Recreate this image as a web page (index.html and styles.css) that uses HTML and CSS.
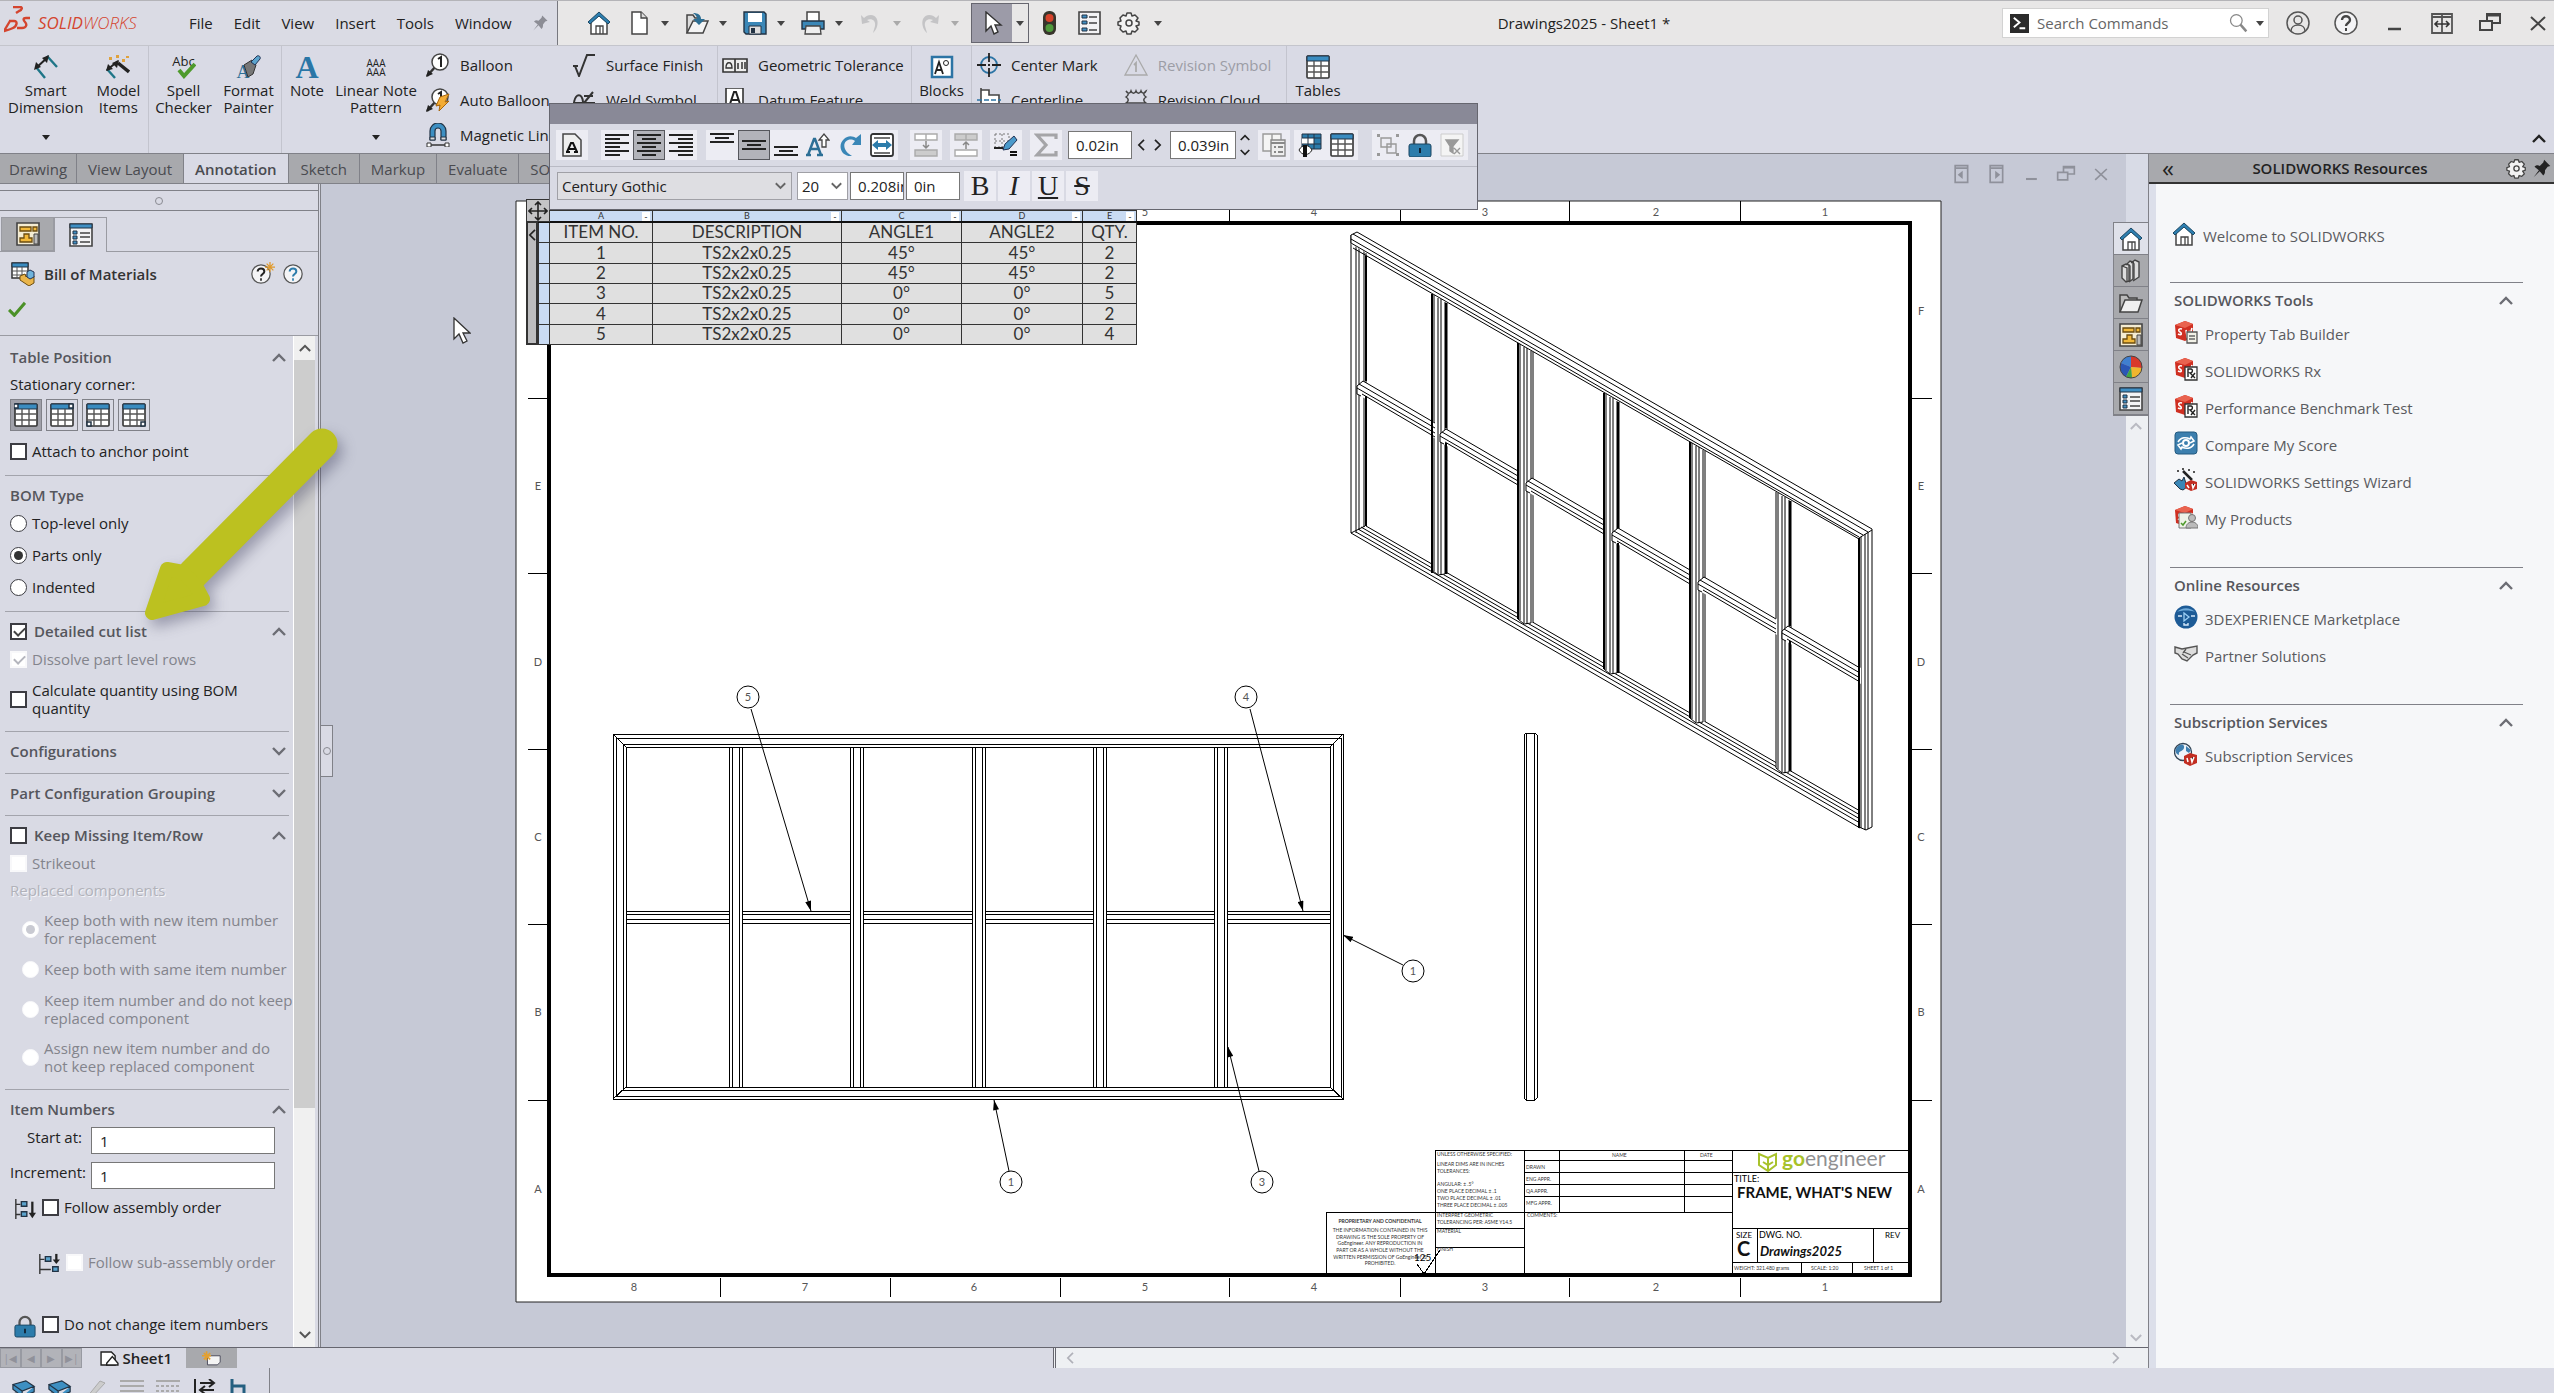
FILE: index.html
```html
<!DOCTYPE html>
<html lang="en">
<head>
  <meta charset="UTF-8" />
  <meta name="viewport" content="width=device-width, initial-scale=1.0"/>
  <title>Drawings2025 - Sheet1 *</title>
  <link rel="stylesheet" href="styles.css">
</head>
<body>

<!-- shared icons -->
<svg class="defs" aria-hidden="true">
  <symbol id="i-home" viewBox="0 0 24 24"><path d="M4 11v12h16V11L12 4z" fill="#fff" stroke="#444" stroke-width="1.5"/><path d="M9 23v-8h7v8M13 15v8" fill="none" stroke="#444" stroke-width="1.3"/><path d="M1 11L12 1l11 10-2 2-9-8-9 8z" fill="#2d7fb0" stroke="#1d4863" stroke-width="1"/></symbol>
  <symbol id="i-new" viewBox="0 0 24 24"><path d="M5 1h9l6 6v16H5z" fill="#fff" stroke="#444" stroke-width="1.5"/><path d="M14 1v6h6" fill="#ddd" stroke="#444" stroke-width="1.3"/></symbol>
  <symbol id="i-open" viewBox="0 0 24 24"><path d="M2 22V4h6l2 3h4v4" fill="#ddd" stroke="#444" stroke-width="1.5"/><path d="M2 22L8 10h15l-5 12z" fill="#f4f4f4" stroke="#444" stroke-width="1.5"/><path d="M8 2c5 0 8 2 8 6h4l-6 6-6-6h4c0-2-1-4-4-6z" fill="#2d6e93"/></symbol>
  <symbol id="i-save" viewBox="0 0 24 24"><path d="M1 1h20l2 2v20H3l-2-2z" fill="#3a87b7" stroke="#234" stroke-width="1.4"/><path d="M5 2h14v9H5z" fill="#fff"/><path d="M6 15h12v8H6z" fill="#ddd" stroke="#234"/><path d="M8 17h4v5H8z" fill="#234"/></symbol>
  <symbol id="i-print" viewBox="0 0 24 24"><path d="M6 10V1h12v9" fill="#fff" stroke="#444" stroke-width="1.5"/><path d="M1 10h22v8H1z" fill="#3a87b7" stroke="#234" stroke-width="1.4"/><path d="M5 15h14l1 8H4z" fill="#eee" stroke="#444" stroke-width="1.3"/></symbol>
  <symbol id="i-undo" viewBox="0 0 24 24"><path d="M2 4l1 9 8-2-3-2c5-2 9 1 8 6l-2 7c6-5 7-17-2-18-3 0-5 1-7 3z" fill="#c4c4c6"/></symbol>
  <symbol id="i-redo" viewBox="0 0 24 24"><path d="M22 4l-1 9-8-2 3-2c-5-2-9 1-8 6l2 7C4 17 3 5 12 4c3 0 5 1 7 3z" fill="#c4c4c6"/></symbol>
  <symbol id="i-cursor" viewBox="0 0 24 24"><path d="M6 1v19l5-5 3 8 4-2-3-7h6z" fill="#fff" stroke="#333" stroke-width="1.4"/></symbol>
  <symbol id="i-light" viewBox="0 0 24 24"><rect x="6" y="0" width="13" height="24" rx="6" fill="#38352c"/><circle cx="12.500" cy="7" r="4" fill="#d8432b"/><circle cx="12.500" cy="17" r="4" fill="#4f9a3c"/></symbol>
  <symbol id="i-list" viewBox="0 0 24 24"><path d="M2 1h21v22H2z" fill="#f3f3f5" stroke="#444" stroke-width="1.6"/><path d="M5 4h5v3H5zM5 10h5v3H5zM5 17h5v3H5z" fill="#3f8fc4" stroke="#234"/><path d="M12 6h8M12 12h8M12 19h8" stroke="#444" stroke-width="1.4"/></symbol>
  <symbol id="i-props" viewBox="0 0 24 24"><path d="M1 1h22v22H1z" fill="#f3f3f5" stroke="#444" stroke-width="1.6"/><path d="M1 1h22v4H1z" fill="#3f8fc4" stroke="#234"/><path d="M4 8h4v3H4zM4 13h4v3H4zM4 18h4v3H4z" fill="#3f8fc4" stroke="#234"/><path d="M11 10h10M11 14h10M11 19h10" stroke="#444" stroke-width="1.4"/></symbol>
  <symbol id="i-gear" viewBox="0 0 24 24"><path d="M10 2h4l1 3 3-1 3 3-2 3 3 1v3l-3 1 2 3-3 3-3-1-1 3h-4l-1-3-3 1-3-3 1-3-3-1v-3l3-1-1-3 3-3 3 1z" fill="#f2f2f2" stroke="#444" stroke-width="1.5" stroke-linejoin="round"/><circle cx="12" cy="12" r="3" fill="none" stroke="#444" stroke-width="1.5"/></symbol>
  <symbol id="i-pin" viewBox="0 0 24 24"><path d="M15 2l7 7-3 1-3 4c0 3 0 4-2 6l-4-5-7 7 6-8-5-4c2-2 4-2 6-1l4-4z" fill="currentColor"/></symbol>
  <symbol id="i-arrow" viewBox="0 0 8 5"><path d="M0 0h8L4 5z" fill="currentColor"/></symbol>
  <symbol id="i-up" viewBox="0 0 14 9"><path d="M1 8l6-6 6 6" fill="none" stroke="currentColor" stroke-width="2.400"/></symbol>
  <symbol id="i-down" viewBox="0 0 14 9"><path d="M1 1l6 6 6-6" fill="none" stroke="currentColor" stroke-width="2.400"/></symbol>
  <symbol id="i-left" viewBox="0 0 9 14"><path d="M8 1L2 7l6 6" fill="none" stroke="currentColor" stroke-width="2"/></symbol>
  <symbol id="i-right" viewBox="0 0 9 14"><path d="M1 1l6 6-6 6" fill="none" stroke="currentColor" stroke-width="2"/></symbol>
  <symbol id="i-search" viewBox="0 0 24 24"><circle cx="10" cy="9" r="7" fill="none" stroke="#888" stroke-width="1.5"/><path d="M15 14l7 8" stroke="#888" stroke-width="3"/></symbol>
  <symbol id="i-user" viewBox="0 0 24 24"><circle cx="12" cy="12" r="11" fill="none" stroke="#555" stroke-width="1.5"/><circle cx="12" cy="9" r="4" fill="none" stroke="#555" stroke-width="1.5"/><path d="M5 20c0-8 14-8 14 0" fill="none" stroke="#555" stroke-width="1.5"/></symbol>
  <symbol id="i-help" viewBox="0 0 24 24"><circle cx="12" cy="12" r="11" fill="#f4f4f6" stroke="#555" stroke-width="1.5"/><path d="M8 9c0-5 8-5 8 0 0 3-4 3-4 6" fill="none" stroke="currentColor" stroke-width="2.400"/><path d="M11 17h2v3h-2z" fill="currentColor"/></symbol>
  <symbol id="i-star" viewBox="0 0 12 12"><path d="M6 0v12M0 6h12M2 2l8 8M10 2l-8 8" stroke="#e09a2c" stroke-width="1.5"/></symbol>
  <symbol id="i-min" viewBox="0 0 24 24"><path d="M6 18h13" stroke="currentColor" stroke-width="2.500"/></symbol>
  <symbol id="i-span" viewBox="0 0 24 24"><path d="M2 3h20v19H2zM12 3v19M2 6h20" fill="none" stroke="#555" stroke-width="1.800"/><path d="M5 13h14M8 10l-3 3 3 3M16 10l3 3-3 3" fill="none" stroke="#333" stroke-width="1.600"/></symbol>
  <symbol id="i-restore" viewBox="0 0 24 24"><path d="M9 10V3h13v9h-8M2 10h12v9H2z" fill="none" stroke="currentColor" stroke-width="2"/><path d="M9 4h13" stroke="currentColor" stroke-width="3"/></symbol>
  <symbol id="i-close" viewBox="0 0 24 24"><path d="M5 6l14 13M19 6L5 19" stroke="currentColor" stroke-width="2"/></symbol>
  <symbol id="i-docprev" viewBox="0 0 24 24"><path d="M5 2h15v20H5zM5 5h15" fill="none" stroke="#8f919b" stroke-width="2"/><path d="M14 8v10l-6-5z" fill="#8f919b"/></symbol>
  <symbol id="i-docnext" viewBox="0 0 24 24"><path d="M5 2h15v20H5zM5 5h15" fill="none" stroke="#8f919b" stroke-width="2"/><path d="M11 8v10l6-5z" fill="#8f919b"/></symbol>

  <symbol id="i-smart" viewBox="0 0 24 24"><path d="M2 12l9 11M13 1l10 11" stroke="#1f7688" stroke-width="2.400"/><path d="M2 13L14 2" stroke="#222" stroke-width="2"/><path d="M0 15l2-8 5 5zM15 0l-2 8-5-5z" fill="#222"/></symbol>
  <symbol id="i-model" viewBox="0 0 24 24"><path d="M1 14l8 9" stroke="#1f7688" stroke-width="2.400"/><path d="M12 8l11 9" stroke="#222" stroke-width="3.500"/><path d="M1 15L12 6" stroke="#222" stroke-width="2"/><path d="M0 16l2-7 5 5zM13 5l-2 8-5-5z" fill="#222"/><path d="M3 2h3v3H3zM10 0h3v3h-3zM16 4h3v3h-3zM20 1h3v2h-3z" fill="#e0a23c"/></symbol>
  <symbol id="i-spell" viewBox="0 0 24 24"><path d="M7 15l5 6L23 9" fill="none" stroke="#4e9a2c" stroke-width="4"/></symbol>
  <symbol id="i-format" viewBox="0 0 24 24"><path d="M7 10l8-5 4 5-3 9-5 3z" fill="#777" stroke="#333"/><path d="M14 7l6-6c2-1 4 1 3 3l-5 6z" fill="#5ba3cc" stroke="#235"/></symbol>
  <symbol id="i-balloon" viewBox="0 0 24 24"><path d="M1 23l9-10" stroke="#333" stroke-width="2.500"/><path d="M0 24l2-7 5 4z" fill="#222"/><circle cx="14" cy="9" r="8" fill="#fff" stroke="#444" stroke-width="1.5"/><path d="M12 6l3-2v10" fill="none" stroke="#222" stroke-width="2"/></symbol>
  <symbol id="i-bolt" viewBox="0 0 24 24"><path d="M23 6l-9 3-4 9 4-1-1 6 10-10-4 1z" fill="#f3ac35" stroke="#a8660c"/></symbol>
  <symbol id="i-magnet" viewBox="0 0 24 24"><path d="M4 17V8a8 8 0 0 1 16 0v9h-5V8a3 3 0 0 0-6 0v9z" fill="#3d8fc2" stroke="#234" stroke-width="1.200"/><path d="M4 14h5v3H4zM15 14h5v3h-5z" fill="#ddd" stroke="#234"/><path d="M3 22h18" stroke="#333" stroke-width="1.5"/><path d="M1 20h4v4H1zM19 20h4v4h-4z" fill="#fff" stroke="#333"/></symbol>
  <symbol id="i-surface" viewBox="0 0 24 24"><path d="M1 13h5M3 13l4 10L15 2h8" fill="none" stroke="#333" stroke-width="2"/></symbol>
  <symbol id="i-weld" viewBox="0 0 24 24"><path d="M2 14c2-9 8-9 9 0M12 15L21 4M12 8h9M1 15h22" fill="none" stroke="#333" stroke-width="2"/></symbol>
  <symbol id="i-geo" viewBox="0 0 26 24"><path d="M1 6h24v13H1zM13 6v13" fill="#eee" stroke="#333" stroke-width="1.600"/><path d="M4 15c0-7 6-7 6 0z" fill="none" stroke="#333" stroke-width="1.300"/><path d="M16 10v6M20 9v7M23 9v7" stroke="#333" stroke-width="1.500"/></symbol>
  <symbol id="i-datum" viewBox="0 0 24 24"><path d="M3 0h17v20H3z" fill="#fff" stroke="#333" stroke-width="1.600"/><path d="M7 16l4-12h2l4 12M8 12h8" fill="none" stroke="#222" stroke-width="2"/></symbol>
  <symbol id="i-block" viewBox="0 0 24 24"><path d="M2 2h20v20H2z" fill="#fff" stroke="#2c74a5" stroke-width="2.500"/><path d="M5 19l4-12 4 12M6 15h6" fill="none" stroke="#222" stroke-width="1.800"/><circle cx="16" cy="8" r="2.500" fill="none" stroke="#222"/></symbol>
  <symbol id="i-center" viewBox="0 0 24 24"><circle cx="12" cy="12" r="8" fill="none" stroke="#2c74a5" stroke-width="1.800"/><path d="M12 0v9M12 15v9M0 12h9M15 12h9M12 11v2M11 12h2" stroke="#222" stroke-width="1.800"/></symbol>
  <symbol id="i-cline" viewBox="0 0 24 24"><path d="M4 0v22M4 2h8v5h10v12H4" fill="#fff" stroke="#444" stroke-width="1.600"/><path d="M0 12h24" stroke="#2c74a5" stroke-width="1.600" stroke-dasharray="5 2"/></symbol>
  <symbol id="i-revsym" viewBox="0 0 24 24"><path d="M12 2l11 20H1z" fill="none" stroke="#aaa" stroke-width="1.300"/><path d="M10 12l2-2v9" fill="none" stroke="#aaa" stroke-width="1.800"/></symbol>
  <symbol id="i-cloud" viewBox="0 0 24 24"><path d="M2 3c2 3 4 3 5 0 1 3 4 3 5 0 1 3 4 3 5 0 1 3 4 3 5 0-3 2-3 4 0 6-3 2-3 4 0 6H2c3-2 3-4 0-6 3-2 3-4 0-6z" fill="none" stroke="#444" stroke-width="1.5"/></symbol>
  <symbol id="i-table" viewBox="0 0 24 24"><rect x="1" y="1" width="22" height="22" rx="1" fill="#fff" stroke="#333" stroke-width="1.600"/><path d="M1 1h22v5H1z" fill="#3a8cc0" stroke="#234"/><path d="M8 6v17M15 6v17M1 11h22M1 17h22" stroke="#555" stroke-width="1.400"/></symbol>
  <symbol id="i-bom" viewBox="0 0 24 24"><path d="M1 1h16v15H1z" fill="#fff" stroke="#333" stroke-width="1.500"/><path d="M1 1h16v4H1z" fill="#3a8cc0" stroke="#234"/><path d="M6 5v11M11 5v11M1 9h16M1 13h16" stroke="#555"/><path d="M9 14l5-2 1 3 4-4 4 3v7l-5 3-9-6z" fill="#eab54a" stroke="#6b4c10"/><path d="M16 10l3-2 4 2v5l-4 2-3-2z" fill="#6fb4dc" stroke="#235"/></symbol>
  <symbol id="i-tree" viewBox="0 0 24 24"><path d="M1 1h22v22H1z" fill="#f4ecd2" stroke="#444" stroke-width="1.600"/><path d="M4 5h11v4H4zM17 5h4v4h-4zM4 20v-4h4v-4h5v4h3v4z" fill="#f2b93b" stroke="#6b4c10" stroke-width="1.300"/><path d="M18 12h4v10h-4z" fill="#bbb" stroke="#444"/></symbol>
  <symbol id="i-books" viewBox="0 0 24 24"><path d="M3 7l4-2 3 1v16l-3 1-4-4zM7 6l4-4 3 1v17l-4 3M12 4l4-3 4 2v15l-6 4" fill="#ddd" stroke="#444" stroke-width="1.400"/><path d="M3 7l5 2v14M10 6l1 1v15M14 3l1 2v16" fill="none" stroke="#444" stroke-width="1.300"/></symbol>
  <symbol id="i-folder" viewBox="0 0 24 24"><path d="M1 21V4h7l2 3h8v4" fill="#bbb" stroke="#444" stroke-width="1.500"/><path d="M1 21l5-12h17l-4 12z" fill="#f0f0f0" stroke="#444" stroke-width="1.500"/></symbol>
  <symbol id="i-sphere" viewBox="0 0 24 24"><path d="M12 12V1a11 11 0 0 0-10 7z" fill="#3f7fd0"/><path d="M12 12L2 8a11 11 0 0 0 5 14z" fill="#2a56b5"/><path d="M12 12V1a11 11 0 0 1 11 12z" fill="#d8392b"/><path d="M12 12l11 1a11 11 0 0 1-10 10z" fill="#efb62e"/><path d="M12 12l1 11a11 11 0 0 1-6-1z" fill="#3fa545"/><circle cx="12" cy="12" r="11" fill="none" stroke="#444"/></symbol>
  <symbol id="i-cube" viewBox="0 0 24 24"><path d="M1 5l10-4 8 3v13l-8 4-9-3z" fill="#cf2f22"/><path d="M1 5l10-4 8 3-8 4z" fill="#e9634f"/><path d="M8 9c-4-1-4 2-2 3s2 4-2 2M12 10l1 6 2-4 1 3 2-7" fill="none" stroke="#fff" stroke-width="1.600"/></symbol>
  <symbol id="i-note-b" viewBox="0 0 24 24"><path d="M13 12h10v11H13z" fill="#f2f2e8" stroke="#555" stroke-width="1.300"/><path d="M15 16h6M15 19h6" stroke="#666" stroke-width="1.300"/></symbol>
  <symbol id="i-rx-b" viewBox="0 0 24 24"><path d="M11 10h12v13H11z" fill="#fff" stroke="#333" stroke-width="1.300"/><path d="M14 20v-8h3c2 0 2 4-1 4l5 5M21 16l-4 5" fill="none" stroke="#222" stroke-width="1.400"/></symbol>
  <symbol id="i-score" viewBox="0 0 24 24"><rect x="1" y="1" width="22" height="22" rx="3" fill="#3c7fae" stroke="#235a80"/><circle cx="12" cy="12" r="3" fill="none" stroke="#fff" stroke-width="2"/><path d="M4 11c3-5 8-5 12-3l1-2 3 4-4 2M20 13c-3 5-8 5-12 3l-1 2-3-4 4-2" fill="none" stroke="#fff" stroke-width="1.600"/></symbol>
  <symbol id="i-wizard" viewBox="0 0 24 24"><path d="M0 15l5-4 3 2 2-4 3 10-4 3-3-1z" fill="#3a87b7" stroke="#234"/><path d="M9 3l9 9" stroke="#222" stroke-width="2.500"/><path d="M3 3h2M8 1h2M14 2h2M19 4h2" stroke="#555" stroke-width="2"/><path d="M11 15l6-3 6 2v7l-6 2-6-3z" fill="#c22e22"/><path d="M13 17l2 3M18 16l1 4 2-4" stroke="#fff" stroke-width="1.500"/></symbol>
  <symbol id="i-person-b" viewBox="0 0 24 24"><path d="M5 8h12v15H5z" fill="#eef2e8" stroke="#777"/><path d="M7 18l2 2 3-4" fill="none" stroke="#4e9a2c" stroke-width="1.500"/><circle cx="18" cy="13" r="3.500" fill="#bbb" stroke="#777"/><path d="M12 23c0-8 12-8 12 0z" fill="#bbb" stroke="#777"/></symbol>
  <symbol id="i-3dx" viewBox="0 0 24 24"><circle cx="12" cy="12" r="11.500" fill="#1d5b96"/><path d="M3 7c5-5 13-5 18 0-4-2-14-2-18 0z" fill="#6ea9d8"/><path d="M10 8l5 4-5 4z" fill="none" stroke="#9cd0f5" stroke-width="1.300"/><path d="M4 11h4M17 11h4M10 18v2h4v-2" fill="none" stroke="#d5e9fa" stroke-width="1.400"/></symbol>
  <symbol id="i-hands" viewBox="0 0 24 24"><path d="M1 5l7 2 5-1 10-2v7l-4 2-6 6-5-2-4-5-3-1z" fill="#ddd" stroke="#555" stroke-width="1.400"/><path d="M8 12l6 4M10 10l7 3M12 7l-3 4" stroke="#555" stroke-width="1.300"/></symbol>
  <symbol id="i-globe" viewBox="0 0 24 24"><circle cx="9" cy="10" r="8.500" fill="#eef4fa" stroke="#345" stroke-width="1.300"/><path d="M3 5c4-4 8-3 7 1s-6 2-5 7c-3-1-5-4-2-8zM12 4l5 4-2 3-3-2z" fill="#3f7fb0"/><path d="M10 14l6-3 7 2v8l-7 3-6-3z" fill="#c22e22"/><path d="M13 16l1 4M17 16l1 4 2-5" stroke="#fff" stroke-width="1.500"/></symbol>
  <symbol id="i-lock" viewBox="0 0 24 24"><path d="M6 12V8a6 6 0 0 1 12 0v4" fill="none" stroke="#555" stroke-width="2.500"/><rect x="1" y="11" width="22" height="13" rx="2" fill="#2c7cab" stroke="#1b4560"/><path d="M12 15v5" stroke="#123" stroke-width="2"/></symbol>
  <symbol id="i-order" viewBox="0 0 24 24"><path d="M2 1v22M2 7h5M2 18h5" fill="none" stroke="#333" stroke-width="1.500"/><path d="M8 4h6v5H8zM8 15h6v5H8z" fill="#5ba3cc" stroke="#234" stroke-width="1.500"/><path d="M20 4v14" stroke="#222" stroke-width="2.500"/><path d="M16 16h8l-4 6z" fill="#222"/></symbol>
  <symbol id="i-suborder" viewBox="0 0 24 24"><path d="M2 1v22M2 7h5M2 18h12" fill="none" stroke="#333" stroke-width="1.500"/><path d="M8 4h6v5H8zM16 15h6v5h-6z" fill="#5ba3cc" stroke="#234" stroke-width="1.500"/><path d="M20 1v8" stroke="#222" stroke-width="2.500"/><path d="M16 7h8l-4 5z" fill="#222"/></symbol>

  <symbol id="i-doca" viewBox="0 0 24 24"><path d="M3 1h12l6 6v16H3z" fill="#eee" stroke="#444" stroke-width="1.500"/><path d="M7 19l4-9h2l4 9M8 16h8M6 19h4M14 19h4" fill="none" stroke="#111" stroke-width="2"/></symbol>
  <symbol id="i-al" viewBox="0 0 24 24"><path d="M0 2h24M0 6h15M0 10h24M0 14h15M0 18h24M0 22h15" stroke="#222" stroke-width="2"/></symbol>
  <symbol id="i-ac" viewBox="0 0 24 24"><path d="M0 2h24M5 6h14M0 10h24M5 14h14M0 18h24M5 22h14" stroke="#222" stroke-width="2"/></symbol>
  <symbol id="i-ar" viewBox="0 0 24 24"><path d="M0 2h24M9 6h15M0 10h24M9 14h15M0 18h24M9 22h15" stroke="#222" stroke-width="2"/></symbol>
  <symbol id="i-vt" viewBox="0 0 24 24"><path d="M0 1h24M5 5h14M0 9h24" stroke="#222" stroke-width="2"/></symbol>
  <symbol id="i-vm" viewBox="0 0 24 24"><path d="M0 8h24M5 12h14M0 16h24" stroke="#222" stroke-width="2"/></symbol>
  <symbol id="i-vb" viewBox="0 0 24 24"><path d="M0 14h24M5 18h14M0 22h24" stroke="#222" stroke-width="2"/></symbol>
  <symbol id="i-aup" viewBox="0 0 24 24"><path d="M2 22l6-16h1l6 16M4 16h9M0 22h5M11 22h6" fill="none" stroke="#2c6f96" stroke-width="2.500"/><path d="M16 14V7h-3l5-6 5 6h-3v7z" fill="#fff" stroke="#444" stroke-width="1.300"/></symbol>
  <symbol id="i-rot" viewBox="0 0 24 24"><path d="M14 23C3 24-1 12 6 6c4-4 9-3 12-1l5-4v11h-9l3-4c-6-4-13 1-10 8 1 3 4 5 7 7z" fill="#3a87b7"/></symbol>
  <symbol id="i-fit" viewBox="0 0 24 24"><rect x="1" y="1" width="22" height="22" rx="2" fill="#fff" stroke="#333" stroke-width="1.800"/><path d="M4 5h16M4 20h16" stroke="#444" stroke-width="1.500"/><path d="M2 12l6-5v3h8V7l6 5-6 5v-3H8v3z" fill="#2c7cab"/></symbol>
  <symbol id="i-insr" viewBox="0 0 24 24"><path d="M1 1h22v6H1zM12 1v6" fill="#fff" stroke="#aaa" stroke-width="1.400"/><path d="M1 17h22v6H1z" fill="#ccc" stroke="#aaa" stroke-width="1.400"/><path d="M12 8v6M9 12l3 3 3-3" fill="none" stroke="#888" stroke-width="1.500"/></symbol>
  <symbol id="i-insc" viewBox="0 0 24 24"><path d="M1 1h22v6H1zM12 1v6" fill="#ccc" stroke="#aaa" stroke-width="1.400"/><path d="M1 17h22v6H1z" fill="#fff" stroke="#aaa" stroke-width="1.400"/><path d="M12 16v-6M9 12l3-3 3 3" fill="none" stroke="#888" stroke-width="1.500"/></symbol>
  <symbol id="i-draw" viewBox="0 0 24 24"><path d="M1 1h14v13H1zM8 1v13M1 8h14" fill="none" stroke="#777" stroke-dasharray="2 2"/><path d="M0 15h9" stroke="#222" stroke-width="2"/><path d="M9 17l2-6 9-8 3 4-8 9z" fill="#4b9acb" stroke="#235"/><path d="M16 19h7M16 22h7" stroke="#111" stroke-width="2"/></symbol>
  <symbol id="i-sigma" viewBox="0 0 24 24"><path d="M22 6V2H3l9 10L3 22h19v-4" fill="none" stroke="#a5a5a8" stroke-width="3.200"/></symbol>
  <symbol id="i-tabprops" viewBox="0 0 24 24"><path d="M1 1h18v17H1zM10 1v17" fill="#f4f4f4" stroke="#999" stroke-width="1.400"/><path d="M9 7h14v16H9z" fill="#eee" stroke="#888" stroke-width="1.400"/><path d="M9 10h14M12 14h2M16 14h5M12 19h2M16 19h5" stroke="#888" stroke-width="1.800"/></symbol>
  <symbol id="i-vis" viewBox="0 0 24 24"><path d="M4 1h19v15H4z" fill="#2c7cab" stroke="#234"/><path d="M4 5h12v6H4z" fill="#fff"/><path d="M10 1v15M16 1v15M4 5h19M4 11h19" stroke="#234"/><path d="M1 17c3-6 10-6 13 0-3 6-10 6-13 0z" fill="#fff" stroke="#222"/><path d="M7 12v12" stroke="#111" stroke-width="4"/></symbol>
  <symbol id="i-group" viewBox="0 0 24 24"><path d="M5 5h10v9H5zM11 11h9v9h-9z" fill="none" stroke="#999" stroke-width="1.400"/><path d="M1 1h3v3H1zM20 1h3v3h-3zM1 20h3v3H1zM20 20h3v3h-3z" fill="#999"/></symbol>
  <symbol id="i-nofilter" viewBox="0 0 24 24"><path d="M1 1h22v22H1z" fill="#f4f4f4" stroke="#ccc"/><path d="M6 7h12l-5 6v7l-3-2v-5zM14 15l6 6M20 15l-6 6" fill="#999" stroke="#999" stroke-width="1.400"/></symbol>
  <symbol id="i-sheet" viewBox="0 0 20 16"><path d="M1 1h11l4 4v10H1z" fill="#fff" stroke="#222" stroke-width="1.500"/><path d="M7 13l6-7 6 7v2H7z" fill="#fff" stroke="#222" stroke-width="1.500"/></symbol>
  <symbol id="i-layer" viewBox="0 0 26 24"><path d="M1 5l14-4 9 6-13 5zM1 5v5l10 8V12M11 18l13-5V7" fill="#3d8fc2" stroke="#234" stroke-width="1.300"/><path d="M3 14l8 6 13-5" fill="none" stroke="#234" stroke-width="1.300"/></symbol>
</svg>

<header class="titlebar">
  <div class="brand">
    <svg class="ds" viewBox="0 0 28 28" aria-hidden="true"><path d="M9 1h7c3 0 2 3-1 4l-3 2M5 15h5c4 0 3 5-1 7-2 1-5 2-9 3l6-10M26 12h-4c-3 0-3 2-1 4s2 6-3 6h-5" fill="none" stroke="#d4452f" stroke-width="2.400"/></svg>
    <span class="wordmark"><b>SOLID</b>WORKS</span>
    <nav class="menu">
      <a href="#">File</a><a href="#">Edit</a><a href="#">View</a><a href="#">Insert</a><a href="#">Tools</a><a href="#">Window</a>
    </nav>
    <button class="icon pin" aria-label="Pin menu"><svg><use href="#i-pin"/></svg></button>
  </div>
  <div class="quick">
    <button class="icon home" aria-label="Home"><svg><use href="#i-home"/></svg></button>
    <div class="drop"><button class="icon" aria-label="New"><svg><use href="#i-new"/></svg></button><button class="caret" aria-label="New options"><svg><use href="#i-arrow"/></svg></button></div>
    <div class="drop"><button class="icon" aria-label="Open"><svg><use href="#i-open"/></svg></button><button class="caret" aria-label="Open options"><svg><use href="#i-arrow"/></svg></button></div>
    <div class="drop"><button class="icon" aria-label="Save"><svg><use href="#i-save"/></svg></button><button class="caret" aria-label="Save options"><svg><use href="#i-arrow"/></svg></button></div>
    <div class="drop"><button class="icon" aria-label="Print"><svg><use href="#i-print"/></svg></button><button class="caret" aria-label="Print options"><svg><use href="#i-arrow"/></svg></button></div>
    <div class="drop off"><button class="icon" aria-label="Undo" disabled><svg><use href="#i-undo"/></svg></button><button class="caret" aria-label="Undo options" disabled><svg><use href="#i-arrow"/></svg></button></div>
    <div class="drop off"><button class="icon" aria-label="Redo" disabled><svg><use href="#i-redo"/></svg></button><button class="caret" aria-label="Redo options" disabled><svg><use href="#i-arrow"/></svg></button></div>
    <div class="select-tool"><button class="icon" aria-label="Select"><svg><use href="#i-cursor"/></svg></button><button class="caret" aria-label="Select options"><svg><use href="#i-arrow"/></svg></button></div>
    <div class="quick-end">
      <button class="icon" aria-label="Rebuild"><svg><use href="#i-light"/></svg></button>
      <button class="icon" aria-label="File properties"><svg><use href="#i-list"/></svg></button>
      <button class="icon" aria-label="Options"><svg><use href="#i-gear"/></svg></button>
    </div>
    <button class="caret" aria-label="More options"><svg><use href="#i-arrow"/></svg></button>
  </div>
  <div class="doc-title">Drawings2025 - Sheet1 *</div>
  <div class="search">
    <svg class="prompt" viewBox="0 0 20 20" aria-hidden="true"><path d="M0 0h20v20H0z" fill="#2b2b2b"/><path d="M4 4l6 5-6 5M10 15h6" fill="none" stroke="#fff" stroke-width="2"/></svg>
    <input type="text" placeholder="Search Commands" aria-label="Search Commands">
    <svg class="glass"><use href="#i-search"/></svg>
    <button class="caret" aria-label="Search options"><svg><use href="#i-arrow"/></svg></button>
  </div>
  <div class="window-buttons">
    <button class="icon" aria-label="Account"><svg><use href="#i-user"/></svg></button>
    <button class="icon" aria-label="Help"><svg><use href="#i-help"/></svg></button>
    <button class="icon" aria-label="Minimize"><svg><use href="#i-min"/></svg></button>
    <button class="icon" aria-label="Span displays"><svg><use href="#i-span"/></svg></button>
    <button class="icon" aria-label="Restore"><svg><use href="#i-restore"/></svg></button>
    <button class="icon" aria-label="Close"><svg><use href="#i-close"/></svg></button>
  </div>
</header>

<section class="ribbon">
  <div class="group g1">
    <button class="big w72"><svg><use href="#i-smart"/></svg><span>Smart<br>Dimension</span><svg class="tri"><use href="#i-arrow"/></svg></button>
    <button class="big w72"><svg><use href="#i-model"/></svg><span>Model<br>Items</span></button>
  </div>
  <div class="group g2">
    <button class="big w64"><span class="abc">Abc<svg><use href="#i-spell"/></svg></span><span>Spell<br>Checker</span></button>
    <button class="big w64"><span class="abc paint">A<svg><use href="#i-format"/></svg></span><span>Format<br>Painter</span></button>
  </div>
  <div class="group g3">
    <button class="big w50"><span class="note-a">A</span><span>Note</span></button>
    <button class="big w88"><span class="aaa">AAA<br>AAA</span><span>Linear Note<br>Pattern</span><svg class="tri"><use href="#i-arrow"/></svg></button>
    <div class="stack s1">
      <button><svg><use href="#i-balloon"/></svg>Balloon</button>
      <button><svg><use href="#i-balloon"/><use href="#i-bolt"/></svg>Auto Balloon</button>
      <button><svg><use href="#i-magnet"/></svg>Magnetic Line</button>
    </div>
    <div class="stack s2">
      <button><svg><use href="#i-surface"/></svg>Surface Finish</button>
      <button><svg><use href="#i-weld"/></svg>Weld Symbol</button>
    </div>
  </div>
  <div class="group g4">
    <div class="stack">
      <button><svg><use href="#i-geo"/></svg>Geometric Tolerance</button>
      <button><svg><use href="#i-datum"/></svg>Datum Feature</button>
    </div>
  </div>
  <div class="group g5">
    <button class="big"><svg><use href="#i-block"/></svg><span>Blocks</span></button>
  </div>
  <div class="group g6">
    <div class="stack">
      <button><svg><use href="#i-center"/></svg>Center Mark</button>
      <button><svg><use href="#i-cline"/></svg>Centerline</button>
    </div>
    <div class="stack">
      <button disabled><svg><use href="#i-revsym"/></svg>Revision Symbol</button>
      <button><svg><use href="#i-cloud"/></svg>Revision Cloud</button>
    </div>
  </div>
  <div class="group g7">
    <button class="big"><svg><use href="#i-table"/></svg><span>Tables</span></button>
  </div>
  <button class="collapse" aria-label="Collapse ribbon"><svg><use href="#i-up"/></svg></button>
</section>

<!-- floating table format toolbar -->
<div class="floatbar">
  <div class="float-title"></div>
  <div class="float-row">
    <div class="tools t1"><button aria-label="Font"><svg><use href="#i-doca"/></svg></button></div>
    <div class="tools t2">
      <button aria-label="Align left"><svg><use href="#i-al"/></svg></button>
      <button class="on" aria-label="Align center"><svg><use href="#i-ac"/></svg></button>
      <button aria-label="Align right"><svg><use href="#i-ar"/></svg></button>
    </div>
    <div class="tools t3">
      <button aria-label="Align top"><svg><use href="#i-vt"/></svg></button>
      <button class="on" aria-label="Align middle"><svg><use href="#i-vm"/></svg></button>
      <button aria-label="Align bottom"><svg><use href="#i-vb"/></svg></button>
      <button aria-label="Text direction"><svg><use href="#i-aup"/></svg></button>
      <button aria-label="Rotate"><svg><use href="#i-rot"/></svg></button>
      <button aria-label="Fit text"><svg><use href="#i-fit"/></svg></button>
    </div>
    <div class="tools t4"><button aria-label="Insert below"><svg><use href="#i-insr"/></svg></button></div>
    <div class="tools t5"><button aria-label="Insert above"><svg><use href="#i-insc"/></svg></button></div>
    <div class="tools t5"><button aria-label="Border editing"><svg><use href="#i-draw"/></svg></button></div>
    <div class="tools t5"><button aria-label="Equation"><svg><use href="#i-sigma"/></svg></button></div>
    <input class="gap-x" type="text" value="0.02in" aria-label="Horizontal padding">
    <div class="hstep"><svg><use href="#i-left"/></svg><svg><use href="#i-right"/></svg></div>
    <input class="gap-y" type="text" value="0.039in" aria-label="Vertical padding">
    <div class="vstep"><svg><use href="#i-up"/></svg><svg><use href="#i-down"/></svg></div>
    <div class="tools"><button aria-label="Table properties"><svg><use href="#i-tabprops"/></svg></button></div>
    <div class="tools"><button aria-label="Show hidden"><svg><use href="#i-vis"/></svg></button><button aria-label="Table"><svg><use href="#i-table"/></svg></button></div>
    <div class="tools t6">
      <button aria-label="Group"><svg><use href="#i-group"/></svg></button>
      <button aria-label="Lock"><svg><use href="#i-lock"/></svg></button>
      <button aria-label="Clear filter"><svg><use href="#i-nofilter"/></svg></button>
    </div>
  </div>
  <div class="float-row font-row">
    <div class="picker font"><select aria-label="Font family"><option>Century Gothic</option></select><svg><use href="#i-down"/></svg></div>
    <div class="picker size"><select aria-label="Font size"><option>20</option></select><svg><use href="#i-down"/></svg></div>
    <input type="text" value="0.208in" aria-label="Text height">
    <input type="text" value="0in" aria-label="Text spacing">
    <button class="letter b">B</button>
    <button class="letter i">I</button>
    <button class="letter u">U</button>
    <button class="letter s">S</button>
  </div>
</div>

<main class="main">
  <div class="left">
    <div class="desk">
      <div class="workarea">
        <div class="tabrow">
          <nav class="tabs">
            <a href="#">Drawing</a><a href="#">View Layout</a><a href="#" class="active">Annotation</a><a href="#">Sketch</a><a href="#">Markup</a><a href="#">Evaluate</a><a href="#">SOLIDWORKS Add-Ins</a>
          </nav>
          <div class="doc-buttons">
            <button aria-label="Previous view"><svg><use href="#i-docprev"/></svg></button>
            <button aria-label="Next view"><svg><use href="#i-docnext"/></svg></button>
            <button aria-label="Minimize document"><svg><use href="#i-min"/></svg></button>
            <button aria-label="Restore document"><svg><use href="#i-restore"/></svg></button>
            <button aria-label="Close document"><svg><use href="#i-close"/></svg></button>
          </div>
        </div>
        <div class="split">
          <aside class="panel">
            <div class="grip"><i></i></div>
            <div class="ptabs">
              <button aria-label="Feature tree"><svg><use href="#i-tree"/></svg></button>
              <button class="active" aria-label="Properties"><svg><use href="#i-props"/></svg></button>
            </div>
            <div class="phead">
              <svg><use href="#i-bom"/></svg>
              <h1>Bill of Materials</h1>
              <button class="whats" aria-label="What's new"><svg><use href="#i-help"/></svg><svg class="star"><use href="#i-star"/></svg></button>
              <button class="blue" aria-label="Help"><svg><use href="#i-help"/></svg></button>
            </div>
            <button class="ok" aria-label="OK"><svg viewBox="0 0 20 18"><path d="M1 10l6 6L19 2" fill="none" stroke="#4b9127" stroke-width="3.500"/></svg></button>
            <div class="pscroll">
              <form class="pbody">
                <section>
                  <h2>Table Position <svg><use href="#i-up"/></svg></h2>
                  <p class="lbl">Stationary corner:</p>
                  <div class="corners">
                    <button type="button" class="on" aria-label="Top left"><svg viewBox="0 0 24 24"><use href="#i-table"/><path d="M0 1h4v4H0z" fill="#fff" stroke="#234" stroke-width="1.500"/></svg></button>
                    <button type="button" aria-label="Top right"><svg viewBox="0 0 24 24"><use href="#i-table"/><path d="M19 1h4v4h-4z" fill="#fff" stroke="#234" stroke-width="1.500"/></svg></button>
                    <button type="button" aria-label="Bottom left"><svg viewBox="0 0 24 24"><use href="#i-table"/><path d="M1 19h4v4H1z" fill="#fff" stroke="#234" stroke-width="1.500"/></svg></button>
                    <button type="button" aria-label="Bottom right"><svg viewBox="0 0 24 24"><use href="#i-table"/><path d="M19 19h4v4h-4z" fill="#fff" stroke="#234" stroke-width="1.500"/></svg></button>
                  </div>
                  <label class="row m10"><input type="checkbox"> Attach to anchor point</label>
                </section>
                <section>
                  <h2>BOM Type</h2>
                  <label class="row m8"><input type="radio" name="bom"> Top-level only</label>
                  <label class="row m12"><input type="radio" name="bom" checked> Parts only</label>
                  <label class="row m12"><input type="radio" name="bom"> Indented</label>
                </section>
                <section>
                  <h2><label class="row"><input type="checkbox" checked> Detailed cut list</label> <svg><use href="#i-up"/></svg></h2>
                  <label class="row off m8"><input type="checkbox" checked disabled> Dissolve part level rows</label>
                  <label class="row two m12"><input type="checkbox"> Calculate quantity using BOM<br>quantity</label>
                </section>
                <section class="short"><h2>Configurations <svg><use href="#i-down"/></svg></h2></section>
                <section class="short"><h2>Part Configuration Grouping <svg><use href="#i-down"/></svg></h2></section>
                <section>
                  <h2><label class="row"><input type="checkbox"> Keep Missing Item/Row</label> <svg><use href="#i-up"/></svg></h2>
                  <label class="row off m8"><input type="checkbox" disabled> Strikeout</label>
                  <p class="lbl ghost">Replaced components</p>
                  <div class="replace">
                    <label class="row off two"><input type="radio" name="rep" checked disabled> <span>Keep both with new item number<br>for replacement</span></label>
                    <label class="row off"><input type="radio" name="rep" disabled> <span>Keep both with same item number</span></label>
                    <label class="row off two"><input type="radio" name="rep" disabled> <span>Keep item number and do not keep<br>replaced component</span></label>
                    <label class="row off two"><input type="radio" name="rep" disabled> <span>Assign new item number and do<br>not keep replaced component</span></label>
                  </div>
                </section>
                <section>
                  <h2>Item Numbers <svg><use href="#i-up"/></svg></h2>
                  <div class="field"><label for="start">Start at:</label><input id="start" type="text" value="1"></div>
                  <div class="field"><label for="inc">Increment:</label><input id="inc" type="text" value="1"></div>
                  <div class="opt"><svg><use href="#i-order"/></svg><label class="row"><input type="checkbox"> Follow assembly order</label></div>
                  <div class="opt sub"><svg><use href="#i-suborder"/></svg><label class="row off"><input type="checkbox" disabled> Follow sub-assembly order</label></div>
                  <div class="opt lock"><svg><use href="#i-lock"/></svg><label class="row"><input type="checkbox"> Do not change item numbers</label></div>
                </section>
              </form>
              <div class="vbar"><div class="cap"><svg><use href="#i-up"/></svg></div><div class="thumb"></div><div class="cap low"><svg><use href="#i-down"/></svg></div></div>
            </div>
          </aside>

          <div class="canvas">
            <div class="handle"><i></i></div>
            <svg class="sheet" viewBox="321 184 1805 1163" preserveAspectRatio="xMinYMin meet">
              <defs>
                <marker id="tip" viewBox="0 0 10 6" refX="10" refY="3" markerWidth="11" markerHeight="6" markerUnits="userSpaceOnUse" orient="auto"><path d="M0 0l10 3-10 3z"/></marker>
                <g id="mull"><path d="M0 747v340M3 747v340M10 747v340M13 747v340"/></g>
                <g id="rail"><path d="M0 911h109M0 914h109M0 919h109M0 923h109"/></g>
                <!-- one upright of the isometric view -->
                <g id="post"><path d="M0 0l15 9v271l-7 1-8-5z" fill="#fff" stroke="none"/><path d="M0 0v276M2 1v276M6 4v276M9 5v276M13 8v272M15 9v271M0 276l6 5 7-1"/></g>
                <!-- one cross rail of the isometric view -->
                <g id="cross"><path d="M0 6l6-5 73 42v16L0 14z" fill="#fff" stroke="none"/><path d="M0 6v8l4 2M0 6l6-5" /><path d="M6 1l72 42M2 4l76 44M0 8l78 45M5 14l73 43" /></g>
              </defs>
              <path class="paper" d="M516 201h1425v1101H516z"/>
              <path class="border" d="M549 223h1361v1052H549z"/>
              <g class="thin">
                <path d="M1229 201v20M1400 201v20M1569 201v20M1740 201v20"/>
                <path d="M720 1278v19M890 1278v19M1060 1278v19M1229 1278v19M1400 1278v19M1569 1278v19M1740 1278v19"/>
                <path d="M1912 398h20M1912 573h20M1912 749h20M1912 924h20M1912 1100h20"/>
                <path d="M528 398h20M528 573h20M528 749h20M528 924h20M528 1100h20"/>
              </g>
              <g class="zone">
                <text x="1145" y="216">5</text><text x="1314" y="216">4</text><text x="1485" y="216">3</text><text x="1656" y="216">2</text><text x="1825" y="216">1</text>
                <text x="634" y="1291">8</text><text x="805" y="1291">7</text><text x="974" y="1291">6</text><text x="1145" y="1291">5</text><text x="1314" y="1291">4</text><text x="1485" y="1291">3</text><text x="1656" y="1291">2</text><text x="1825" y="1291">1</text>
                <text x="1921" y="315">F</text><text x="1921" y="490">E</text><text x="1921" y="666">D</text><text x="1921" y="841">C</text><text x="1921" y="1016">B</text><text x="1921" y="1193">A</text>
                <text x="538" y="490">E</text><text x="538" y="666">D</text><text x="538" y="841">C</text><text x="538" y="1016">B</text><text x="538" y="1193">A</text>
              </g>

              <!-- front view -->
              <g class="thin">
                <path d="M613 734h730v365H613zM616 738h725v358H616zM623 744h710v346H623zM626 747h704v340H626z"/>
                <path d="M613 734l13 13M1343 734l-13 13M613 1099l13-12M1343 1099l-13-12"/>
                <use href="#mull" x="729"/><use href="#mull" x="850"/><use href="#mull" x="972"/><use href="#mull" x="1093"/><use href="#mull" x="1214"/>
                <path d="M626 911h103M626 914h103M626 919h103M626 923h103"/>
                <use href="#rail" x="742"/><use href="#rail" x="863"/><use href="#rail" x="985"/><use href="#rail" x="1106"/>
                <path d="M1227 911h103M1227 914h103M1227 919h103M1227 923h103"/>
              </g>
              <!-- side view -->
              <path class="thin" d="M1524 1098V735l2-2h9l2 2v363l-2 2h-9zM1526 733v367M1534 733v367"/>

              <!-- balloons -->
              <g class="balloon">
                <path d="M751 709l60 202" marker-end="url(#tip)"/><path d="M1250 709l53 202" marker-end="url(#tip)"/><path d="M1403 965l-60-30" marker-end="url(#tip)"/><path d="M1009 1171l-15-71" marker-end="url(#tip)"/><path d="M1259 1171l-31-124" marker-end="url(#tip)"/>
                <circle cx="748" cy="697" r="11"/><circle cx="1246" cy="697" r="11"/><circle cx="1413" cy="971" r="11"/><circle cx="1011" cy="1182" r="11"/><circle cx="1262" cy="1182" r="11"/>
                <text x="748" y="701">5</text><text x="1246" y="701">4</text><text x="1413" y="975">1</text><text x="1011" y="1186">1</text><text x="1262" y="1186">3</text>
              </g>

              <!-- isometric view -->
              <g class="iso">
                <path d="M1351 235v298M1356 240v293M1359 245v285M1364 251v276M1366 253v273"/>
                <path d="M1351 533l509 295M1356 532l504 291M1358 529l502 290M1361 527l499 288M1366 526l494 285M1351 533l14-7"/>
                <use href="#post" x="1432" y="294"/><use href="#post" x="1518" y="343"/><use href="#post" x="1604" y="393"/><use href="#post" x="1690" y="442"/><use href="#post" x="1776" y="492"/>
                <path d="M1351 235l6-3 515 298-12 9-509-295z" fill="#fff" stroke="none"/>
                <path d="M1357 232l515 297M1353 234l515 298M1351 239l512 296M1351 243l508 294M1353 248l506 291M1351 235l6-3M1351 235v8"/>
                <path d="M1859 538l13-9v297l-6 4-7-3z" fill="#fff" stroke="none"/>
                <path d="M1859 538v290M1861 537v291M1865 534v296M1868 532v297M1872 529v298l-6 3-7-3M1859 538l13-8"/>
                <use href="#cross" x="1357" y="380"/><use href="#cross" x="1440" y="428"/><use href="#cross" x="1526" y="477"/><use href="#cross" x="1612" y="527"/><use href="#cross" x="1698" y="576"/><use href="#cross" x="1782" y="625"/>
                <path class="thick" d="M1366 256v125M1366 396v130M1432 294v279M1446 303v125M1446 443v131M1518 343v276M1604 393v276M1618 402v126M1618 543v130M1690 442v276M1790 501v125M1790 641v130M1859 538v290"/>
              </g>

              <!-- title block -->
              <g class="thin">
                <path d="M1435 1150h475M1435 1150v124M1524 1150v124M1559 1150v62M1684 1150v62M1732 1150v124M1524 1160h208M1524 1172h386M1524 1184h208M1524 1196h208M1326 1212h406M1326 1212v62M1435 1228h89M1435 1247h89M1732 1228h178M1732 1262h178M1757 1228v34M1873 1228v34M1801 1262v12M1852 1262v12"/>
                <path d="M1417 1264l7 10 16-24"/>
              </g>
              <g class="tiny">
                <text x="1437" y="1156">UNLESS OTHERWISE SPECIFIED:</text>
                <text x="1437" y="1166">LINEAR DIMS ARE IN INCHES</text>
                <text x="1437" y="1173">TOLERANCES:</text>
                <text x="1437" y="1186">ANGULAR: ± .5°</text>
                <text x="1437" y="1193">ONE PLACE DECIMAL  ± .1</text>
                <text x="1437" y="1200">TWO PLACE DECIMAL  ± .01</text>
                <text x="1437" y="1207">THREE PLACE DECIMAL  ± .005</text>
                <text x="1437" y="1217">INTERPRET GEOMETRIC</text>
                <text x="1437" y="1224">TOLERANCING PER: ASME Y14.5</text>
                <text x="1437" y="1233">MATERIAL</text><text x="1437" y="1251">FINISH</text>
                <text x="1526" y="1169">DRAWN</text><text x="1526" y="1181">ENG APPR.</text><text x="1526" y="1193">QA APPR.</text><text x="1526" y="1205">MFG APPR.</text>
                <text x="1527" y="1217">COMMENTS:</text>
                <text x="1612" y="1157">NAME</text><text x="1700" y="1157">DATE</text>
                <text x="1734" y="1270">WEIGHT: 321.480 grams</text><text x="1811" y="1270">SCALE: 1:20</text><text x="1864" y="1270">SHEET 1 of 1</text>
              </g>
              <g class="tiny mid">
                <text x="1380" y="1223" font-weight="700">PROPRIETARY AND CONFIDENTIAL</text>
                <text x="1380" y="1232">THE INFORMATION CONTAINED IN THIS</text>
                <text x="1380" y="1239">DRAWING IS THE SOLE PROPERTY OF</text>
                <text x="1380" y="1245">GoEngineer. ANY REPRODUCTION IN</text>
                <text x="1380" y="1252">PART OR AS A WHOLE WITHOUT THE</text>
                <text x="1380" y="1259">WRITTEN PERMISSION OF GoEngineer IS</text>
                <text x="1380" y="1265">PROHIBITED.</text>
              </g>
              <g class="block">
                <text x="1414" y="1261" font-size="10">125</text>
                <path d="M1759 1154l9 4 8-4v11l-8 6-9-6zM1768 1158v13M1763 1162l5 3 5-3" fill="none" stroke="#a8c22b" stroke-width="2"/>
                <text x="1782" y="1166" font-size="21" fill="#8f9092"><tspan fill="#a8c22b" font-weight="700">go</tspan>engineer</text>
                <text x="1734" y="1182" font-size="9">TITLE:</text>
                <text x="1737" y="1198" font-size="15" font-weight="700" fill="#111">FRAME, WHAT'S NEW</text>
                <text x="1736" y="1238" font-size="8">SIZE</text><text x="1759" y="1238" font-size="9">DWG. NO.</text><text x="1885" y="1238" font-size="8">REV</text>
                <text x="1737" y="1256" font-size="20" font-weight="700" fill="#111">C</text>
                <text x="1760" y="1256" font-size="13" font-weight="700" font-style="italic" fill="#111">Drawings2025</text>
              </g>
            </svg>

            <div class="bom">
              <div class="move"><svg viewBox="0 0 20 20"><path d="M10 1v18M1 10h18M7 4l3-3 3 3M7 16l3 3 3-3M4 7l-3 3 3 3M16 7l3 3-3 3" fill="none" stroke="#222" stroke-width="1.600"/></svg></div>
              <div class="bar"><svg><use href="#i-left"/></svg></div>
              <table>
                <thead><tr><th></th><th>A</th><th>B</th><th>C</th><th>D</th><th>E</th></tr></thead>
                <tbody>
                  <tr><th></th><td>ITEM NO.</td><td>DESCRIPTION</td><td>ANGLE1</td><td>ANGLE2</td><td>QTY.</td></tr>
                  <tr><th></th><td>1</td><td>TS2x2x0.25</td><td>45°</td><td>45°</td><td>2</td></tr>
                  <tr><th></th><td>2</td><td>TS2x2x0.25</td><td>45°</td><td>45°</td><td>2</td></tr>
                  <tr><th></th><td>3</td><td>TS2x2x0.25</td><td>0°</td><td>0°</td><td>5</td></tr>
                  <tr><th></th><td>4</td><td>TS2x2x0.25</td><td>0°</td><td>0°</td><td>2</td></tr>
                  <tr><th></th><td>5</td><td>TS2x2x0.25</td><td>0°</td><td>0°</td><td>4</td></tr>
                </tbody>
              </table>
            </div>
            <svg class="pointer" viewBox="0 0 18 28" aria-hidden="true"><path d="M1 1v21l5-5 4 9 4-2-4-8h7z" fill="#fff" stroke="#333" stroke-width="1.300"/></svg>
          </div>
        </div>
      </div>
      <div class="scroll">
        <nav class="task-tabs">
          <button class="active" aria-label="Resources"><svg><use href="#i-home"/></svg></button>
          <button aria-label="Design library"><svg><use href="#i-books"/></svg></button>
          <button aria-label="File explorer"><svg><use href="#i-folder"/></svg></button>
          <button aria-label="View palette"><svg><use href="#i-tree"/></svg></button>
          <button aria-label="Appearances"><svg><use href="#i-sphere"/></svg></button>
          <button aria-label="Custom properties"><svg><use href="#i-props"/></svg></button>
        </nav>
        <div class="track"><svg><use href="#i-up"/></svg><svg><use href="#i-down"/></svg></div>
      </div>
    </div>
    <div class="sheetbar">
      <div class="nav"><button aria-label="First sheet">|◀</button><button aria-label="Previous sheet">◀</button><button aria-label="Next sheet">▶</button><button aria-label="Last sheet">▶|</button></div>
      <button class="sheet-tab"><svg><use href="#i-sheet"/></svg>Sheet1</button>
      <button class="add" aria-label="Add sheet"><svg viewBox="0 0 22 16"><path d="M6 5h14v7l-3 3H6z" fill="#f4f4f4" stroke="#445"/><path d="M5 0v10M0 5h10M2 2l7 7M9 2L2 9" stroke="#e5a02e" stroke-width="1.800"/></svg></button>
      <div class="hbar"><svg><use href="#i-left"/></svg><svg><use href="#i-right"/></svg></div>
    </div>
  </div>

  <aside class="taskpane">
    <header><button aria-label="Collapse pane">«</button><h2>SOLIDWORKS Resources</h2><svg><use href="#i-gear"/></svg><svg><use href="#i-pin"/></svg></header>
    <div class="tbody">
      <a class="welcome" href="#"><svg><use href="#i-home"/></svg>Welcome to SOLIDWORKS</a>
      <section>
        <h3>SOLIDWORKS Tools <svg><use href="#i-up"/></svg></h3>
        <a href="#"><svg><use href="#i-cube"/><use href="#i-note-b"/></svg>Property Tab Builder</a>
        <a href="#"><svg><use href="#i-cube"/><use href="#i-rx-b"/></svg>SOLIDWORKS Rx</a>
        <a href="#"><svg><use href="#i-cube"/><use href="#i-rx-b"/></svg>Performance Benchmark Test</a>
        <a href="#"><svg><use href="#i-score"/></svg>Compare My Score</a>
        <a href="#"><svg><use href="#i-wizard"/></svg>SOLIDWORKS Settings Wizard</a>
        <a href="#"><svg><use href="#i-cube"/><use href="#i-person-b"/></svg>My Products</a>
      </section>
      <section>
        <h3>Online Resources <svg><use href="#i-up"/></svg></h3>
        <a href="#"><svg><use href="#i-3dx"/></svg>3DEXPERIENCE Marketplace</a>
        <a href="#"><svg><use href="#i-hands"/></svg>Partner Solutions</a>
      </section>
      <section>
        <h3>Subscription Services <svg><use href="#i-up"/></svg></h3>
        <a href="#"><svg><use href="#i-globe"/></svg>Subscription Services</a>
      </section>
    </div>
  </aside>
</main>

<footer class="linebar">
  <button aria-label="Layers"><svg><use href="#i-layer"/></svg></button>
  <button aria-label="Layer properties"><svg><use href="#i-layer"/></svg></button>
  <button aria-label="Line color"><svg viewBox="0 0 24 24"><path d="M3 18L16 2l5 2L8 18z" fill="#ccc" stroke="#aaa"/></svg></button>
  <button aria-label="Line thickness"><svg viewBox="0 0 24 24"><path d="M0 2h24M0 7h24M0 12h24" stroke="#aaa" stroke-width="2"/></svg></button>
  <button aria-label="Line style"><svg viewBox="0 0 24 24"><path d="M0 2h24" stroke="#aaa" stroke-width="2"/><path d="M0 7h24M0 12h24" stroke="#aaa" stroke-width="2" stroke-dasharray="3 2"/></svg></button>
  <button aria-label="Hide edge"><svg viewBox="0 0 24 24"><path d="M3 0v20" stroke="#222" stroke-width="2"/><path d="M8 4h14M8 11h14M17 0l5 4-5 4M13 7l-5 4 5 4" fill="none" stroke="#222" stroke-width="2"/></svg></button>
  <button aria-label="Color display"><svg viewBox="0 0 24 24"><path d="M4 0v20M4 7h12v12" fill="none" stroke="#245f80" stroke-width="3"/></svg></button>
</footer>

<!-- callout arrow over the cut list option -->
<svg class="callout" viewBox="0 0 220 220" aria-hidden="true"><path d="M199 38L70 168" stroke-width="31" stroke-linecap="round"/><path d="M44 163l16 3 13 14 7 13-51 14z" stroke-width="14" stroke-linejoin="round"/></svg>

</body>
</html>
```
FILE: styles.css
```css
* {
  box-sizing: border-box;
}
body {
  margin: 0;
  height: 100vh;
  display: flex;
  flex-direction: column;
  overflow: hidden;
  position: relative;
  font-family: "Open Sans", "Noto Sans", sans-serif;
  font-size: 15px;
  line-height: 20px;
  color: #222;
  background: #d9dae5;
}
.defs {
  position: absolute;
  width: 0;
  height: 0;
}
button {
  font: inherit;
  color: inherit;
  background: none;
  border: 0;
  padding: 0;
}
a {
  color: inherit;
  text-decoration: none;
}
h1, h2, h3, p {
  margin: 0;
}
input, select {
  font: inherit;
  color: #222;
}
svg {
  display: block;
  width: 24px;
  height: 24px;
}

/* title bar */
.titlebar {
  height: 46px;
  flex: none;
  display: flex;
  align-items: center;
  background: #e8e7e7;
  border-top: 1px solid #b4b4b8;
  border-bottom: 1px solid #c4c5cc;
}
.brand {
  width: 558px;
  height: 44px;
  display: flex;
  align-items: center;
  padding-left: 4px;
  background: #dadbe4;
  border-right: 1px solid #77787f;
}
.brand .ds {
  width: 28px;
  height: 28px;
  margin-bottom: 6px;
}
.wordmark {
  width: 115px;
  margin-left: 6px;
  font-size: 17px;
  font-style: italic;
  font-weight: 300;
  color: #d4452f;
}
.menu {
  display: flex;
  gap: 21px;
  margin-left: 36px;
}
.brand .pin {
  margin-left: auto;
  margin-right: 5px;
  color: #8c8d95;
}
.brand .pin svg {
  width: 18px;
  height: 18px;
}
.icon {
  width: 24px;
  display: grid;
  place-items: center;
  color: #444;
}
.caret {
  width: 16px;
  display: grid;
  place-items: center;
  color: #444;
}
.caret svg {
  width: 8px;
  height: 5px;
}
.quick {
  display: flex;
  align-items: center;
  height: 44px;
}
.home {
  margin-left: 29px;
  margin-right: 16px;
}
.drop {
  width: 58px;
  display: flex;
  gap: 6px;
}
.drop.off .caret {
  color: #aaa;
}
.drop:nth-child(7) {
  width: 54px;
}
.select-tool {
  display: flex;
  height: 40px;
  border: 1px solid #66666f;
}
.select-tool .icon {
  width: 40px;
  background: #9c9ba8;
}
.quick-end {
  display: flex;
  gap: 16px;
  margin: 0 9px 0 8px;
}
.doc-title {
  flex: 1;
  text-align: center;
}
.search {
  width: 267px;
  height: 30px;
  display: flex;
  align-items: center;
  background: #fff;
  border: 1px solid #d2d2d2;
  padding-left: 7px;
}
.search .prompt {
  width: 19px;
  height: 19px;
  flex: none;
}
.search input {
  flex: 1;
  min-width: 0;
  border: 0;
  padding: 0 0 0 8px;
  outline: 0;
}
.search input::placeholder {
  color: #666;
  opacity: 1;
}
.search .glass {
  width: 20px;
  height: 20px;
  margin-right: 4px;
}
.window-buttons {
  display: flex;
  gap: 24px;
  padding: 0 4px 0 17px;
}

/* ribbon */
.ribbon {
  height: 108px;
  flex: none;
  display: flex;
  position: relative;
  background: #d9dae5;
  border-bottom: 1px solid #808188;
}
.group {
  display: flex;
  padding-top: 9px;
  position: relative;
  border-right: 1px solid #c3c4ce;
}
.g1 { width: 149px; padding-left: 8px; }
.g2 { width: 133px; padding-left: 2px; }
.g3 { width: 436px; }
.g4 { width: 194px; padding-left: 4px; }
.g5 { width: 60px; }
.g6 { width: 315px; padding-left: 5px; gap: 26px; }
.g7 { width: 62px; border: 0; }
.big {
  display: flex;
  flex-direction: column;
  align-items: center;
  flex: 1;
  gap: 3px;
  line-height: 17px;
  position: relative;
}
.big.w72 { flex: 0 0 73px; }
.big.w72 + .w72 { flex-basis: 70px; }
.big.w64 { flex: 0 0 65px; }
.big.w50 { flex: 0 0 50px; }
.big.w88 { flex: 0 0 88px; }
.big .tri {
  width: 8px;
  height: 5px;
  margin-top: 16px;
}
.abc {
  position: relative;
  width: 24px;
  height: 24px;
  font-size: 13px;
  line-height: 13px;
}
.abc svg {
  position: absolute;
  top: 0;
  left: 0;
}
.abc.paint {
  font-family: "Liberation Serif", serif;
  font-size: 18px;
  line-height: 34px;
  text-align: left;
  color: #2c6f96;
}
.note-a {
  height: 24px;
  font: bold 32px/24px "Liberation Serif", serif;
  color: #2a76a6;
}
.aaa {
  height: 24px;
  font-size: 10px;
  line-height: 9px;
  padding-top: 4px;
}
.stack {
  display: flex;
  flex-direction: column;
  gap: 11px;
  margin-top: -2px;
}
.stack button {
  height: 24px;
  display: flex;
  align-items: center;
  gap: 10px;
  white-space: nowrap;
}
.stack button:disabled {
  color: #9c9da6;
}
.s1 {
  width: 152px;
  padding-left: 6px;
}
.g4 .stack svg {
  width: 26px;
}
.collapse {
  margin: auto 8px 10px auto;
}
.collapse svg {
  width: 14px;
  height: 9px;
}

/* floating toolbar */
.floatbar {
  position: absolute;
  left: 549px;
  top: 103px;
  width: 929px;
  height: 107px;
  z-index: 5;
  background: #d9dae4;
  border: 1px solid #66666f;
}
.float-title {
  height: 20px;
  background: #898997;
}
.float-row {
  height: 43px;
  display: flex;
  align-items: center;
  padding: 0 6px;
  border-bottom: 1px solid #b9bac4;
}
.float-row.font-row {
  border: 0;
  height: 37px;
  gap: 2px;
  padding-left: 7px;
}
.tools {
  display: flex;
  background: #ececf3;
}
.tools button {
  width: 32px;
  height: 30px;
  display: grid;
  place-items: center;
}
.tools button.on {
  background: #b2b3ba;
  border: 1px solid #55565c;
}
.t2 { margin-left: 13px; }
.t3 { margin-left: 9px; }
.t4 { margin-left: 12px; }
.t5 { margin-left: 8px; }
.t6 { margin-left: 14px; }
.float-row input {
  height: 28px;
  border: 1px solid #777;
  background: #fff;
  padding: 0 0 0 7px;
}
.float-row .gap-x { width: 64px; margin-left: 6px; }
.float-row .gap-y { width: 66px; margin-left: 8px; }
.hstep {
  display: flex;
  gap: 9px;
  margin-left: 5px;
}
.hstep svg {
  width: 8px;
  height: 12px;
}
.vstep {
  margin: 0 8px 0 4px;
  display: grid;
  gap: 8px;
}
.vstep svg {
  width: 10px;
  height: 7px;
}
.vstep + .tools {
  margin-right: 4px;
}
.font-row input {
  width: 54px;
}
.picker {
  position: relative;
}
.picker select {
  appearance: none;
  width: 100%;
  height: 28px;
  padding: 0 0 0 4px;
  border: 1px solid #a0a0a6;
  border-radius: 0;
  background: #fff;
}
.picker svg {
  position: absolute;
  right: 6px;
  top: 10px;
  width: 11px;
  height: 8px;
  color: #666;
  pointer-events: none;
}
.picker.font {
  width: 235px;
  margin-right: 3px;
}
.picker.font select {
  background: #dedee2;
}
.picker.size {
  width: 51px;
}
.letter {
  width: 32px;
  height: 30px;
  font: 28px/28px "Liberation Serif", serif;
  background: #ececf3;
}
.letter.b { margin-left: 2px; }
.letter.i { font-style: italic; }
.letter.u { text-decoration: underline; }
.letter.s { text-decoration: line-through; }

/* work area */
.main {
  flex: 1;
  display: flex;
  min-height: 0;
}
.left {
  flex: 1;
  min-width: 0;
  display: flex;
  flex-direction: column;
}
.desk {
  flex: 1;
  display: flex;
  min-height: 0;
}
.workarea {
  flex: 1;
  min-width: 0;
  display: flex;
  flex-direction: column;
  background: #c6c9d6;
}
.tabrow {
  height: 30px;
  flex: none;
  display: flex;
  justify-content: space-between;
  align-items: flex-end;
}
.tabs {
  display: flex;
  background: #a8a9ad;
  color: #4a4b50;
  border-bottom: 1px solid #808188;
  height: 30px;
}
.tabs a {
  padding: 5px 11px;
  border-right: 1px solid #808188;
}
.tabs a:nth-child(1) {
  padding: 5px 9px;
}
.tabs .active {
  background: #d9dae5;
  font-weight: 600;
}
.tabs a:nth-child(4) {
  padding: 5px 12px;
}
.doc-buttons {
  display: flex;
  gap: 11px;
  padding-right: 13px;
  color: #8f919b;
}
.doc-buttons svg {
  width: 24px;
  height: 20px;
}
.split {
  flex: 1;
  display: flex;
  min-height: 0;
}
.panel {
  width: 321px;
  flex: none;
  display: flex;
  flex-direction: column;
  background: #d9dae4;
  border-right: 3px double #808188;
  padding-top: 6px;
}
.grip {
  height: 21px;
  flex: none;
  border: solid #808188;
  border-width: 1px 0;
  display: grid;
  place-items: center;
}
.grip i, .handle i {
  width: 8px;
  height: 8px;
  border: 1px solid #8a8b92;
  border-radius: 50%;
}
.ptabs {
  display: flex;
  height: 41px;
  flex: none;
  padding: 6px 0 0 1px;
  border-bottom: 1px solid #9a9ba2;
}
.ptabs button {
  width: 53px;
  background: #a8a9ad;
  display: grid;
  place-items: center;
  border: 1px solid #9a9ba2;
}
.ptabs .active {
  background: #d9dae4;
  border-bottom: 0;
  margin-bottom: -1px;
}
.phead {
  display: flex;
  align-items: center;
  height: 44px;
  flex: none;
  padding: 0 15px 0 11px;
}
.phead h1 {
  font-size: 15px;
  font-weight: 600;
  color: #333;
  flex: 1;
  padding-left: 9px;
}
.phead button {
  margin-left: 12px;
  position: relative;
}
.phead button svg {
  width: 20px;
  height: 20px;
}
.phead .blue {
  color: #2c7cab;
}
.phead button .star {
  position: absolute;
  width: 10px;
  height: 10px;
  top: -2px;
  right: -4px;
}
.ok {
  display: flex;
  align-items: flex-start;
  padding: 5px 0 0 8px;
  height: 39px;
  flex: none;
}
.ok svg {
  width: 18px;
  height: 16px;
}
.pscroll {
  flex: 1;
  min-height: 0;
  display: flex;
  border-top: 1px solid #9a9ba2;
}
.pbody {
  flex: 1;
  padding: 0 4px 0 5px;
  overflow: hidden;
}
.pbody section {
  border-top: 1px solid #a3a4ac;
  padding: 9px 0 14px 5px;
}
.pbody section:first-child {
  border: 0;
  padding-top: 11px;
}
.pbody .short {
  padding-bottom: 12px;
}
.pbody h2, .tbody h3 {
  font-size: 15px;
  line-height: 20px;
  font-weight: 600;
  color: #55565c;
  display: flex;
  justify-content: space-between;
  align-items: center;
  padding-right: 3px;
}
.pbody h2 > svg, .tbody h3 > svg {
  width: 14px;
  height: 9px;
  color: #6c6d74;
}
.lbl {
  margin-top: 7px;
}
.ghost {
  color: #b1b2ba;
  text-shadow: 1px 1px #f4f4f8;
}
.corners {
  display: flex;
  gap: 4px;
  margin-top: 5px;
}
.corners button {
  width: 32px;
  height: 32px;
  border: 1px solid #808188;
  display: grid;
  place-items: center;
}
.corners .on {
  background: #a0a1aa;
}
.row {
  display: block;
  min-height: 20px;
  position: relative;
  padding-left: 22px;
  white-space: nowrap;
}
.row.off {
  color: #83848c;
}
.row.two {
  line-height: 18px;
}
.m8 { margin-top: 8px; }
.m10 { margin-top: 10px; }
.m12 { margin-top: 12px; }
h2 .row {
  padding-left: 24px;
}
.row input {
  appearance: none;
  position: absolute;
  left: 0;
  top: 50%;
  width: 17px;
  height: 17px;
  margin: -8px 0 0;
  border: 2px solid #3c3c42;
  background: #fff;
}
.row input[type="radio"] {
  border-radius: 50%;
  border-width: 1px;
}
.row input:disabled {
  border-color: #f8f8fa;
}
.row input[type="checkbox"]:checked::after {
  content: "";
  display: block;
  width: 9px;
  height: 5px;
  margin: 2px;
  border: solid #444;
  border-width: 0 0 2px 2px;
  transform: rotate(-45deg);
}
.row input[type="radio"]:checked::after {
  content: "";
  display: block;
  width: 9px;
  height: 9px;
  margin: 3px;
  border-radius: 50%;
  background: #333;
}
.row input[type="checkbox"]:disabled::after {
  border-color: #b4b5bd;
}
.row input[type="radio"]:disabled::after {
  background: #c9cad2;
}
.replace {
  display: grid;
  gap: 12px;
  padding: 11px 0 0 12px;
}
.field {
  display: flex;
  justify-content: space-between;
  margin-top: 8px;
  padding-right: 14px;
  height: 27px;
}
.field label {
  width: 72px;
  text-align: right;
}
.field input {
  width: 184px;
  height: 27px;
  border: 1px solid #777;
  padding: 0 8px;
}
.opt {
  display: flex;
  align-items: flex-start;
  gap: 6px;
  margin-top: 8px;
  padding-left: 4px;
}
.opt svg {
  width: 22px;
  height: 24px;
}
.opt.sub {
  margin-top: 31px;
  padding-left: 28px;
}
.opt.lock {
  margin-top: 38px;
}
.vbar {
  width: 22px;
  margin-right: 3px;
  background: #f0f0f0;
  display: flex;
  flex-direction: column;
  border-left: 1px solid #fff;
}
.vbar .cap {
  height: 24px;
  display: grid;
  place-items: center;
}
.vbar .cap svg {
  width: 12px;
  height: 8px;
  color: #555;
}
.vbar .thumb {
  height: 74%;
  background: #cdcdcd;
}
.vbar .low {
  margin-top: auto;
}
.canvas {
  flex: 1;
  min-width: 0;
  position: relative;
}
.handle {
  position: absolute;
  left: 0;
  top: 541px;
  width: 12px;
  height: 52px;
  background: #d9dae4;
  border: 1px solid #808188;
  border-left: 0;
  display: grid;
  place-items: center;
}

/* drawing sheet */
.sheet {
  width: 100%;
  height: 100%;
}
.paper {
  fill: #fff;
  stroke: #222;
}
.border {
  fill: none;
  stroke: #000;
  stroke-width: 4;
}
.thin, .iso {
  fill: none;
  stroke: #000;
  shape-rendering: crispEdges;
}
.iso {
  shape-rendering: auto;
}
.thick {
  stroke-width: 2;
}
.balloon {
  stroke: #000;
  fill: none;
}
.sheet text {
  font-family: "Century Gothic", Lato, sans-serif;
  stroke: none;
}
.zone text, .balloon text {
  font-size: 11px;
  text-anchor: middle;
  fill: #555;
}
.tiny text {
  font-size: 5px;
  fill: #333;
}
.mid text {
  text-anchor: middle;
}
.block text {
  white-space: pre;
}

/* bill of materials table */
.bom {
  position: absolute;
  left: 205px;
  top: 15px;
}
.bom .move {
  position: absolute;
  z-index: 1;
  width: 24px;
  height: 23px;
  background: #c4c4c6;
  border: 1px solid #333;
  display: grid;
  place-items: center;
}
.bom .move svg {
  width: 20px;
  height: 20px;
}
.bom .bar {
  position: absolute;
  top: 22px;
  left: 0;
  width: 12px;
  height: 124px;
  background: #bdbdbf;
  border: 2px solid #333;
  padding-top: 6px;
}
.bom .bar svg {
  width: 8px;
  height: 12px;
}
.bom table {
  margin: 11px 0 0 12px;
  width: 599px;
  border-collapse: collapse;
  table-layout: fixed;
  font: 17px/18px "Century Gothic", Lato, sans-serif;
  color: #333;
  text-align: center;
}
.bom td, .bom th {
  border: 1px solid #333;
  padding: 0;
}
.bom th {
  background: #c9dbf3;
  font-size: 9px;
  font-weight: normal;
  line-height: 10px;
  position: relative;
}
.bom thead th:nth-child(1) { width: 11px; }
.bom thead th:nth-child(2) { width: 103px; }
.bom thead th:nth-child(3) { width: 189px; }
.bom thead th:nth-child(4) { width: 120px; }
.bom thead th:nth-child(5) { width: 121px; }
.bom thead th {
  border-bottom: 2px solid #111;
}
.bom thead th + th::after {
  content: "-";
  position: absolute;
  right: 2px;
  bottom: 0;
  width: 8px;
  line-height: 9px;
  background: #fff;
}
.bom tbody tr {
  height: 20px;
}
.bom tbody tr:nth-child(3n + 2) {
  height: 21px;
}
.bom td {
  background: #e0e0e0;
}
.pointer {
  position: absolute;
  left: 132px;
  top: 133px;
  width: 18px;
  height: 28px;
}

/* right scroll column with task pane tabs */
.scroll {
  width: 22px;
  position: relative;
  display: flex;
  flex-direction: column;
  background: #d8dbe6;
}
.task-tabs {
  position: absolute;
  left: -13px;
  top: 68px;
  width: 35px;
  border: 1px solid #808188;
  border-right: 0;
}
.task-tabs button {
  width: 34px;
  height: 32px;
  background: #a8a9ad;
  border-bottom: 1px solid #808188;
  display: grid;
  place-items: center;
}
.task-tabs .active {
  background: #dfe1ea;
}
.track {
  flex: 1;
  margin-top: 258px;
  padding: 10px 4px 5px 4px;
  background: #eef0f3;
  display: flex;
  flex-direction: column;
  justify-content: space-between;
}
.track svg {
  width: 12px;
  height: 8px;
  color: #b9bac2;
}

/* sheet tabs */
.sheetbar {
  height: 21px;
  flex: none;
  display: flex;
  background: #d9dae4;
  border-top: 1px solid #66666f;
}
.nav {
  display: flex;
  width: 82px;
  background: #b2b3b9;
}
.nav button {
  flex: 1;
  font-size: 10px;
  line-height: 18px;
  color: #90919a;
  border: 1px solid #989aa2;
}
.sheet-tab {
  width: 104px;
  display: flex;
  align-items: center;
  justify-content: flex-end;
  gap: 3px;
  padding-right: 14px;
  font-weight: 600;
  line-height: 18px;
}
.sheet-tab svg {
  width: 19px;
  height: 15px;
}
.add {
  width: 51px;
  background: #a8a9ad;
  display: grid;
  place-items: center;
}
.add svg {
  width: 20px;
  height: 15px;
}
.hbar {
  width: 51%;
  margin-left: auto;
  background: #eef0f3;
  border-left: 3px double #66666f;
  display: flex;
  justify-content: space-between;
  align-items: center;
  padding: 0 28px 0 10px;
}
.hbar svg {
  width: 8px;
  height: 12px;
  color: #b0b1b9;
}

/* task pane */
.taskpane {
  width: 406px;
  flex: none;
  display: flex;
  flex-direction: column;
  background: #f6f7f9;
  border-left: 1px solid #808188;
}
.taskpane header {
  height: 30px;
  display: flex;
  align-items: center;
  background: #a8a9ad;
  border-bottom: 2px solid #333;
  padding: 0 2px 0 13px;
  color: #222;
  gap: 4px;
}
.taskpane header h2 {
  flex: 1;
  text-align: center;
  font-size: 15px;
  font-weight: 600;
}
.taskpane header button {
  font-size: 24px;
  line-height: 20px;
}
.taskpane header svg {
  width: 21px;
  height: 21px;
}
.tbody {
  flex: 1;
  border-left: 7px solid #dcdfea;
  padding: 39px 31px 0 14px;
  color: #5a5b60;
}
.tbody a {
  display: flex;
  align-items: center;
  gap: 7px;
  height: 26px;
  margin-bottom: 11px;
  padding-left: 4px;
}
.tbody a svg {
  margin-top: -5px;
}
.tbody .welcome {
  margin-bottom: 33px;
  padding-left: 2px;
}
.tbody section {
  border-top: 1px solid #808188;
  padding: 7px 0 24px;
}
.tbody h3 {
  padding: 0 10px 0 4px;
  margin-bottom: 11px;
}

/* line format toolbar */
.linebar {
  height: 25px;
  flex: none;
  display: flex;
  gap: 12px;
  padding: 11px 0 0 12px;
  overflow: hidden;
  width: 270px;
  border-right: 1px solid #808188;
}

/* callout */
.callout {
  position: absolute;
  left: 123px;
  top: 406px;
  width: 220px;
  height: 220px;
  overflow: visible;
  z-index: 6;
  fill: #bcc120;
  stroke: #bcc120;
  filter: drop-shadow(5px 7px 7px rgba(60, 60, 90, 0.4));
  pointer-events: none;
}
```
